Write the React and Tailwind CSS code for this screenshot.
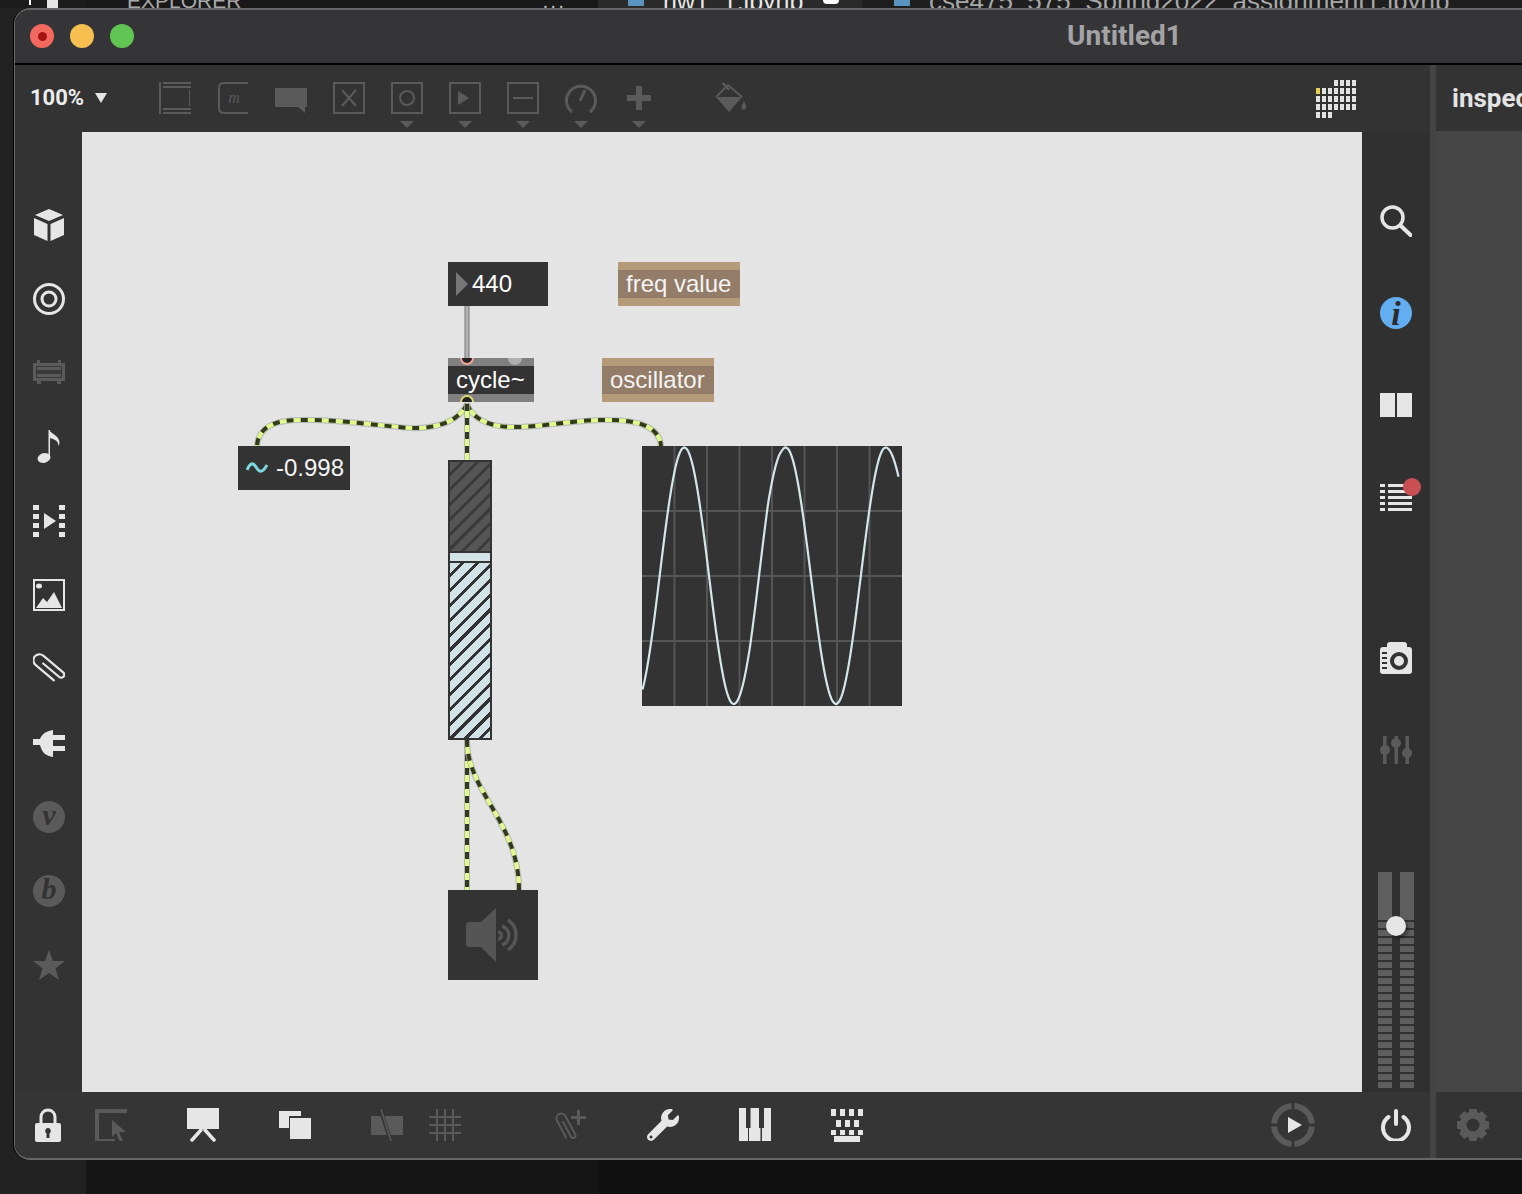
import React from 'react'
import { FaWrench } from 'react-icons/fa'

const SANS = "font-['Liberation_Sans',Arial,sans-serif]"
const UI = "font-['Roboto','Liberation_Sans',sans-serif]"
const LIGHT = '#e6e6e6'
const DIM = '#5a5a5a'

const Svg = ({ w = 32, h = 32, children, className = '' }) => (
  <svg width={w} height={h} viewBox={`0 0 ${w} ${h}`} className={`block shrink-0 ${className}`}>{children}</svg>
)

// patcher toolbar objects
const ToolIcons = [
  <g fill={DIM}>
    <path d="M0 0h2v32H0zM4 0h28v2H4zM4 4h28v2H4zM4 26h28v2H4zM4 30h28v2H4zM30 8h1v16h-1z" />
  </g>,
  <g>
    <path d="M31 1H7Q2 1 2 6v20q0 5 5 5h24" fill="none" stroke={DIM} strokeWidth="2" />
    <text x="17" y="21" fontSize="16" fontStyle="italic" fontFamily="Liberation Serif" fill={DIM} textAnchor="middle">m</text>
  </g>,
  <path d="M0 6h32v19h-2v6l-7-6H0z" fill={DIM} />,
  <g fill="none" stroke={DIM} strokeWidth="2">
    <rect x="1" y="1" width="30" height="30" />
    <path d="M9 8l14 16M23 8L9 24" />
  </g>,
  <g fill="none" stroke={DIM} strokeWidth="2">
    <rect x="1" y="1" width="30" height="30" />
    <circle cx="16" cy="16" r="7" />
  </g>,
  <g>
    <rect x="1" y="1" width="30" height="30" fill="none" stroke={DIM} strokeWidth="2" />
    <path d="M9 9l11 7-11 7z" fill={DIM} />
  </g>,
  <g fill="none" stroke={DIM} strokeWidth="2">
    <rect x="1" y="1" width="30" height="30" />
    <path d="M6 16h20" />
  </g>,
  <g fill="none" stroke={DIM} strokeWidth="3">
    <path d="M7 30A14.5 14.5 0 1 1 25 30" />
    <path d="M20 8l-5 11" />
  </g>,
  <path d="M13 4h6v9h9v6h-9v9h-6v-9H4v-6h9z" fill={DIM} />,
]

const Triangle = () => <div className="w-0 h-0 border-x-[7px] border-x-transparent border-t-[7px] border-t-[#5a5a5a]" />

const Toolbar = () => (
  <div className="h-[67px] flex items-start bg-[#333333] relative">
    <div className="w-[131px] h-full flex items-center pl-[15px] pb-[1px] text-[#ececec]">
      <span className={`${UI} font-bold text-[22px] leading-none`}>100%</span>
      <div className="ml-[11px] w-0 h-0 border-x-[6px] border-x-transparent border-t-[10px] border-t-[#e6e6e6]" />
    </div>
    {ToolIcons.map((icon, i) => (
      <div key={i} className="w-[58px] flex flex-col items-center pt-[17px]">
        <Svg>{icon}</Svg>
        {i > 3 && <div className="mt-[7px]"><Triangle /></div>}
      </div>
    ))}
    <div className="w-[34px]" />
    <div className="w-[58px] flex justify-center pt-[17px]">
      <Svg>
        <path fill="none" stroke={DIM} strokeWidth="2" d="M1 15L13 3 27 15" />
        <path fill={DIM} d="M1 15h26L14 30zM8 0l7 7-1.500 1.500-7-7z" />
        <path fill={DIM} d="M29 19c2 4 3 6 1.500 8-1.500 1.500-4 .5-4-1.500 0-2 1.500-4 2.500-6.500z" />
      </Svg>
    </div>
    <div className="ml-auto mr-[74px] mt-[15px]"><LevelGrid /></div>
  </div>
)

const LevelGrid = () => {
  const rows = [[3, 4, 5, 6], [0, 1, 2, 3, 4, 5, 6], [0, 1, 2, 3, 4, 5, 6], [0, 1, 2, 3, 4, 5, 6], [0, 1, 2]]
  return (
    <div className="flex flex-col gap-[2px]">
      {rows.map((r, y) => (
        <div key={y} className="grid grid-cols-[repeat(7,4px)] gap-x-[2px]">
          {r.map((x) => (
            <div key={x} className={`h-[6px] ${y === 1 && x === 0 ? 'bg-[#e9cf4e]' : 'bg-[#e2e2e2]'}`} style={{ gridColumnStart: x + 1 }} />
          ))}
        </div>
      ))}
    </div>
  )
}

const Clip = ({ color, sw = 2.2, angle = 40 }) => (
  <path
    d="M7 15.500H28a3 3 0 0 0 0-6H2a6 6 0 0 0 0 12H26"
    fill="none" stroke={color} strokeWidth={sw} strokeLinecap="round"
    transform={`rotate(${angle} 16 16) translate(1 0)`}
  />
)

const SideText = ({ children }) => (
  <Svg>
    <ellipse cx="16" cy="16" rx="16" ry="16" fill={DIM} />
    <text x="16" y="24" textAnchor="middle" fontSize="30" fontWeight="700" fontStyle="italic" fontFamily="Liberation Serif" fill="#333">{children}</text>
  </Svg>
)

const LeftIcons = [
  <Svg><path fill={LIGHT} d="M16 0L30 6 16 12 2 6zM1 9l13.500 6v17L1 26zM31 9L17.500 15v17L31 26z" /></Svg>,
  <Svg><g fill="none" stroke={LIGHT} strokeWidth="3"><circle cx="16" cy="16" r="14.500" /><circle cx="16" cy="16" r="7" /></g></Svg>,
  <Svg>
    <path d="M0 6h4V3h3v3h18V3h3v3h4v18h-4v3h-4v-3H8v3H4v-3H0z" fill={DIM} />
    <path d="M3 9h26v12H3z" fill="#3a3a3a" />
    <path d="M4 10h24v3H4zM4 17h24v3H4z" fill={DIM} />
  </Svg>,
  <Svg h={34}>
    <ellipse cx="11" cy="28" rx="6.500" ry="4.800" fill={LIGHT} transform="rotate(-15 11 28)" />
    <path d="M15.500 28H17V0h-1.500z" fill={LIGHT} />
    <path d="M16.500 0c1 4 10 5 10 13 0 1-.5 2-1 3 0-5-4-7-9-8z" fill={LIGHT} />
  </Svg>,
  <Svg>
    <path fill={LIGHT} d="M0 0h6v5H0zM0 9h6v5H0zM0 18h6v5H0zM0 27h6v5H0zM26 0h6v5h-6zM26 9h6v5h-6zM26 18h6v5h-6zM26 27h6v5h-6z" />
    <path fill={LIGHT} d="M11 8l12 8-12 8z" />
  </Svg>,
  <Svg>
    <rect x="1" y="1" width="30" height="30" fill="none" stroke={LIGHT} strokeWidth="2" />
    <ellipse cx="6" cy="7" rx="3" ry="2.500" fill={LIGHT} />
    <path fill={LIGHT} d="M3 29l7-10 4 4 7-10 8 16z" />
  </Svg>,
  <Svg><Clip color={LIGHT} /></Svg>,
  <Svg>
    <path fill={LIGHT} d="M0 12h7c2-5 6-8 13-9v5h12v5H20v6h12v5H20v6C13 29 9 26 7 18H0z" />
  </Svg>,
  <SideText>v</SideText>,
  <SideText>b</SideText>,
  <Svg><path fill={DIM} d="M16 1l4 11h12l-9.500 7.500L26 31l-10-7-10 7 3.500-11.500L0 12h12z" /></Svg>,
]

const LeftBar = () => (
  <div className="w-[67px] pt-[56px] bg-[#333333] flex flex-col items-center">
    {LeftIcons.map((icon, i) => (
      <div key={i} className="h-[74px] w-full flex items-center justify-center">{icon}</div>
    ))}
  </div>
)

const MeterColumn = () => (
  <div className="w-[14px] flex flex-col gap-[2px]">
    <div className="h-[48px] bg-[#5e5e5e]" />
    {Array.from({ length: 21 }).map((_, i) => <div key={i} className="h-[6px] bg-[#5e5e5e]" />)}
  </div>
)

const RightBar = () => (
  <div className="w-[68px] bg-[#303030] flex flex-col items-center pt-[43px] pb-[4px]">
    <div className="h-[92px] flex items-center">
      <Svg>
        <g fill="none" stroke={LIGHT} strokeLinecap="round">
          <circle cx="12.500" cy="12.500" r="10.500" strokeWidth="3.500" />
          <path d="M21 21l9.500 9" strokeWidth="4" />
        </g>
      </Svg>
    </div>
    <div className="h-[92px] flex items-center">
      <Svg>
        <circle cx="16" cy="16" r="16" fill="#62aef0" />
        <text x="16" y="28" textAnchor="middle" fontSize="34" fontWeight="700" fontStyle="italic" fontFamily="Liberation Serif" fill="#2b2b2b">i</text>
      </Svg>
    </div>
    <div className="h-[92px] flex items-center">
      <Svg h={26}><path fill={LIGHT} d="M0 1h15v24H0zM17 1h15v24H17z" /></Svg>
    </div>
    <div className="h-[92px] flex items-center relative">
      <Svg>
        <path fill={LIGHT} d="M0 1h5v3H0zM8 1h24v3H8zM0 7h5v3H0zM8 7h24v3H8zM0 13h5v3H0zM8 13h24v3H8zM0 19h5v3H0zM8 19h24v3H8zM0 25h5v3H0zM8 25h24v3H8z" transform="translate(0 2)" />
      </Svg>
      <div className="absolute left-[23px] top-[27px] w-[18px] h-[18px] rounded-full bg-[#c94f55]" />
    </div>
    <div className="h-[90px] mt-[70px] flex items-center">
      <Svg>
        <path fill={LIGHT} d="M7 3q0-3 3-3h14q3 0 3 3v2h2q3 0 3 3v21q0 3-3 3H3q-3 0-3-3V8q0-3 3-3h4z" />
        <circle cx="19" cy="19" r="7" fill="none" stroke="#333" strokeWidth="4" />
        <path fill="#333" d="M2 10h5v2H2zM2 15h5v2H2zM2 20h5v2H2zM2 25h5v2H2z" />
      </Svg>
    </div>
    <div className="h-[90px] flex items-center">
      <Svg>
        <g fill={DIM}>
          <path d="M3 4h3.500v28H3zM14.500 4H18v28h-3.500zM25.500 4H29v28h-3.500z" />
          <circle cx="5" cy="18" r="5" /><circle cx="16" cy="11" r="5" /><circle cx="27" cy="21" r="5" />
        </g>
      </Svg>
    </div>
    <div className="mt-auto relative flex gap-[8px]">
      <MeterColumn />
      <MeterColumn />
      <div className="absolute left-[8px] top-[44px] w-[20px] h-[20px] rounded-full bg-[#e6e6e6] shadow-[3px_3px_3px_rgba(0,0,0,0.35)]" />
    </div>
  </div>
)

const BottomBar = () => (
  <div className="h-[66px] bg-[#353535] flex items-center pl-[17px]">
    <div className="w-[32px] flex justify-center">
      <Svg w={26} h={34}>
        <path d="M6 16V9a7 7 0 0 1 14 0v7" fill="none" stroke={LIGHT} strokeWidth="3" />
        <path fill={LIGHT} fillRule="evenodd" d="M2 15h22q2 0 2 2v15q0 2-2 2H2q-2 0-2-2V17q0-2 2-2zM13 20a3 3 0 0 0-1.500 5.500V30h3v-4.500A3 3 0 0 0 13 20z" />
      </Svg>
    </div>
    <Svg className="ml-[31px]">
      <path fill="none" stroke={DIM} strokeWidth="4" d="M32 2H2v30h18" />
      <path fill={DIM} d="M17 11l14 12-7 0 4 9-3 1-4-9-4 4z" />
    </Svg>
    <Svg h={34} className="ml-[60px]">
      <path fill={LIGHT} d="M0 0h32v21H0z" />
      <path d="M14 22L5 32M18 22l9 10" stroke={LIGHT} strokeWidth="3.500" strokeLinecap="round" fill="none" />
    </Svg>
    <Svg h={30} className="ml-[60px]">
      <path fill={LIGHT} d="M0 1h22v5H10v12H0zM11 8h21v21H11z" />
    </Svg>
    <Svg className="ml-[60px]">
      <path fill={DIM} d="M0 7h32v19H0z" />
      <path d="M9 -1l11 34" stroke="#353535" strokeWidth="4" />
      <path d="M10 0l10 32" stroke={DIM} strokeWidth="1.500" />
    </Svg>
    <Svg className="ml-[26px]">
      <path fill="none" stroke={DIM} strokeWidth="2" d="M8 0v32M16 0v32M24 0v32M0 8h32M0 16h32M0 24h32" />
    </Svg>
    <Svg className="ml-[94px]">
      <g transform="translate(-2 6) scale(.8)"><Clip color={DIM} sw={2.5} angle={62} /></g>
      <path fill={DIM} d="M22 1h3v6h6v3h-6v6h-3v-6h-6V7h6z" />
    </Svg>
    <FaWrench size={32} color={LIGHT} className="block shrink-0 ml-[60px]" />
    <Svg h={34} className="ml-[60px]">
      <path fill={LIGHT} d="M0 0h7v20h2v13H0zM10 20h1.500V0H20v20h1.500v13H10zM23 20h2V0h7v33h-9z" />
    </Svg>
    <Svg h={34} className="ml-[60px]">
      <path fill={LIGHT} d="M0 1h5v7H0zM9 1h5v7H9zM18 1h5v7h-5zM27 1h5v7h-5zM5 12h5v7H5zM14 12h5v7h-5zM23 12h5v7h-5zM0 22h5v5H0zM9 22h5v5H9zM18 22h5v5h-5zM27 22h5v5h-5zM3 28h26v6H3z" />
    </Svg>
    <Svg w={44} h={44} className="ml-[408px]">
      <g fill="none" stroke={DIM} strokeWidth="6">
        <path d="M20.500 3.100A19 19 0 0 0 3.100 20.500" />
        <path d="M23.500 3.100A19 19 0 0 1 40.900 20.500" />
        <path d="M40.900 23.500A19 19 0 0 1 23.500 40.900" />
        <path d="M3.100 23.500A19 19 0 0 0 20.500 40.900" />
      </g>
      <path fill={LIGHT} d="M17 14l14 8-14 8z" />
    </Svg>
    <Svg className="ml-[65px]">
      <g fill="none" stroke={LIGHT} strokeLinecap="round" strokeWidth="4">
        <path d="M8.500 8A13 13 0 1 0 23.500 8" />
        <path d="M16 2v13" />
      </g>
    </Svg>
  </div>
)

const Gear = () => (
  <Svg>
    <g fill={DIM}>
      {[0, 45, 90, 135, 180, 225, 270, 315].map((a) => (
        <rect key={a} x="12" y="0" width="8" height="7" rx="1" transform={`rotate(${a} 16 16)`} />
      ))}
    </g>
    <circle cx="16" cy="16" r="10" fill="none" stroke={DIM} strokeWidth="7" />
  </Svg>
)

// waveform keypoints: half cosines between peaks and troughs
const wavePath = () => {
  const keys = [[-7, 258], [42.3, 1.5], [91.7, 258], [143.7, 1.5], [194, 258], [243.7, 1.5], [302, 258]]
  const pts = []
  for (let x = 0.5; x <= 256.5; x += 1) {
    let i = 0
    while (x > keys[i + 1][0]) i++
    const [x0, y0] = keys[i]
    const [x1, y1] = keys[i + 1]
    const t = (x - x0) / (x1 - x0)
    let y = y0 + (y1 - y0) * (1 - Math.cos(Math.PI * t)) / 2
    // kink on the rising edge of the second cycle
    if (x > 108 && x <= 126) y -= (10 * (x - 108)) / 18
    if (x > 126 && x < 140) y -= (10 * (140 - x)) / 14
    pts.push(`${x.toFixed(1)} ${y.toFixed(1)}`)
  }
  return 'M' + pts.join('L')
}

const Scope = () => (
  <div className="absolute left-[560px] top-[314px] w-[260px] h-[260px] bg-[#333333]">
    <svg width="260" height="260" className="block">
      <path
        d="M32.500 0v260M65 0v260M97.500 0v260M130 0v260M162.500 0v260M195 0v260M227.500 0v260M0 65h260M0 130h260M0 195h260"
        stroke="#555" strokeWidth="2" fill="none"
      />
      <path d={wavePath()} stroke="#d3e6ea" strokeWidth="2.200" fill="none" />
    </svg>
  </div>
)

const Wire = ({ d }) => (
  <g fill="none">
    <path d={d} stroke="#a9a9a9" strokeWidth="6" opacity="0.75" />
    <path d={d} stroke="#e0fb8c" strokeWidth="4" />
    <path d={d} stroke="#33391f" strokeWidth="4" strokeDasharray="7 7" />
  </g>
)

// coordinates below are relative to the patcher canvas
const Wires = () => (
  <svg width="1280" height="960" className="absolute left-0 top-0">
    <path d="M385 174v52" stroke="#999" strokeWidth="5.500" fill="none" />
    <path d="M385 174v52" stroke="#b0b0b0" strokeWidth="2" fill="none" />
    <Wire d="M385 272C376 292 348 297 328 296C298 294 258 287 218 288C188 288 176 298 175 314" />
    <Wire d="M385 272C392 290 413 296 438 295C468 294 498 287 528 288C558 288 578 296 579 314" />
    <Wire d="M385 272V328" />
    <Wire d="M385 608V758" />
    <Wire d="M385 608C385 660 437 690 437 758" />
  </svg>
)

const Comment = ({ className, children }) => (
  <div className={`absolute h-[44px] border-y-[8px] border-[#b59b7a] bg-[#937c68] px-[8px] flex items-center text-[#f4f4f4] text-[24px] leading-none ${SANS} ${className}`}>
    {children}
  </div>
)

const Canvas = () => (
  <div className="w-[1280px] h-[960px] bg-[#e4e4e4] relative overflow-hidden">
    <Wires />
    <div className={`absolute left-[366px] top-[130px] w-[100px] h-[44px] bg-[#333333] flex items-center pl-[8px] text-white text-[24px] leading-none ${SANS}`}>
      <div className="w-0 h-0 border-y-[12px] border-y-transparent border-l-[12px] border-l-[#777777]" />
      <span className="ml-[4px]">440</span>
    </div>
    <Comment className="left-[536px] top-[130px] w-[122px]">freq value</Comment>
    <Comment className="left-[520px] top-[226px] w-[112px]">oscillator</Comment>
    <div className={`absolute left-[366px] top-[226px] w-[86px] h-[44px] border-y-[8px] border-[#808080] bg-[#333333] flex items-center pl-[8px] text-white text-[24px] leading-none ${SANS}`}>
      cycle~
    </div>
    <div className="absolute left-[378px] top-[226px] w-[14px] h-[7px] rounded-b-full bg-[#222222] border-2 border-t-0 border-[#eea596]" />
    <div className="absolute left-[426px] top-[226px] w-[14px] h-[7px] rounded-b-full bg-[#b0b0b0]" />
    <div className="absolute left-[378px] top-[263px] w-[14px] h-[7px] rounded-t-full bg-[#222222] border-2 border-b-0 border-[#d8d870]" />
    <div className={`absolute left-[156px] top-[314px] w-[112px] h-[44px] bg-[#333333] flex items-center pl-[8px] text-[#f4f4f4] text-[24px] leading-none ${SANS}`}>
      <svg width="22" height="14" viewBox="0 0 22 14" className="block">
        <path d="M1 9C4 2 7 1 10 6S16 13 21 4" fill="none" stroke="#7fd6de" strokeWidth="3" />
      </svg>
      <span className="ml-[8px]">-0.998</span>
    </div>
    <div className="absolute left-[366px] top-[328px] w-[44px] h-[280px] border-2 border-[#333333] flex flex-col">
      <div className="h-[89px] bg-[repeating-linear-gradient(135deg,#555555_0,#555555_7.5px,#3b3b3b_7.5px,#3b3b3b_10.5px)]" />
      <div className="h-[12px] border-y-2 border-[#333333] bg-[#d2e3e8]" />
      <div className="flex-1 bg-[repeating-linear-gradient(135deg,#d2e3e8_0,#d2e3e8_7.5px,#333333_7.5px,#333333_10.5px)]" />
    </div>
    <Scope />
    <div className="absolute left-[366px] top-[758px] w-[90px] h-[90px] bg-[#333333] flex items-center justify-center">
      <svg width="54" height="54" viewBox="0 0 54 54" className="block">
        <path fill="#555" d="M3 14h12L30 0v54L15 39H3q-3 0-3-3V17q0-3 3-3z" />
        <g fill="none" stroke="#555" strokeWidth="3.500">
          <path d="M32 24a3.500 3.500 0 0 1 0 7" />
          <path d="M36 18a10 10 0 0 1 0 19" />
          <path d="M42 12a18 18 0 0 1 0 30" />
        </g>
      </svg>
    </div>
  </div>
)

const Inspector = () => (
  <div className="flex-1 flex">
    <div className="w-[6px] bg-[#444444]" />
    <div className="flex-1 flex flex-col overflow-hidden">
      <div className="h-[66px] bg-[#333333] flex items-center pl-[16px]">
        <span className={`${UI} font-bold text-[#e4e4e4] text-[26px] leading-none`}>inspector</span>
      </div>
      <div className="flex-1 bg-[#464646]" />
      <div className="h-[66px] bg-[#333333] pl-[21px] flex items-center"><Gear /></div>
    </div>
  </div>
)

const TopStrip = () => (
  <div className={`h-[8px] flex overflow-hidden bg-[#1c1c1c] text-[#a8a8a8] leading-[14px] ${SANS}`}>
    <div className="w-[86px] relative">
      <div className="absolute left-[29px] top-0 w-[2px] h-[5px] bg-white" />
      <div className="absolute left-[47px] top-0 w-[11px] h-[8px] bg-[#e6e6e6]" />
    </div>
    <div className="w-[512px] bg-[#191919] flex pl-[41px] text-[21px]">
      <span className="-mt-[6px]">EXPLORER</span>
      <span className="ml-auto mr-[32px] -mt-[6px] tracking-[2px] text-[#bbbbbb]">...</span>
    </div>
    <div className="w-[264px] bg-[#2a2a2a] flex pl-[30px] text-[25px]">
      <div className="w-[16px] h-[6px] bg-[#5a94bf]" />
      <span className="ml-[19px] -mt-[6px] text-[#e8e8e8]">hw1_1.ipynb</span>
      <div className="ml-[20px] w-[16px] h-[4px] rounded-b-full bg-white" />
    </div>
    <div className="flex-1 bg-[#1e1e1e] flex pl-[32px] text-[26px]">
      <div className="w-[16px] h-[6px] bg-[#5a94bf]" />
      <span className="ml-[19px] -mt-[6px] whitespace-nowrap">cse475_575_Spring2022_assignment1.ipynb</span>
    </div>
  </div>
)

const BottomStrip = () => (
  <div className="h-[34px] flex">
    <div className="w-[86px] bg-[#222222]" />
    <div className="w-[512px] bg-[#161616]" />
    <div className="flex-1 bg-[#111111]" />
  </div>
)

const App = () => (
  <div className="w-[1522px] h-[1194px] overflow-hidden bg-[#222222] flex flex-col">
    <TopStrip />
    <div className="h-[1152px] ml-[14px] w-[1508px] shrink-0 flex flex-col rounded-l-[16px] overflow-hidden border-l border-t-2 border-b-2 border-[#666666] shadow-[-1px_0_0_#000]">
      <div className="h-[55px] pb-[1px] bg-[#353537] border-b-2 border-black flex items-center relative shrink-0">
        <div className="flex gap-[16px] pl-[15px]">
          <div className="w-[24px] h-[24px] rounded-full bg-[#f4695f] flex items-center justify-center">
            <div className="w-[9px] h-[9px] rounded-full bg-[#a5140f]" />
          </div>
          <div className="w-[24px] h-[24px] rounded-full bg-[#f6bf4f]" />
          <div className="w-[24px] h-[24px] rounded-full bg-[#61c554]" />
        </div>
        <span className={`absolute left-[1052px] ${UI} font-bold text-[28px] leading-none text-[#a3a3a5]`}>Untitled1</span>
      </div>
      <div className="flex-1 flex min-h-0">
        <div className="w-[1415px] shrink-0 flex flex-col">
          <Toolbar />
          <div className="flex">
            <LeftBar />
            <Canvas />
            <RightBar />
          </div>
          <BottomBar />
        </div>
        <Inspector />
      </div>
    </div>
    <BottomStrip />
  </div>
)

export default App
